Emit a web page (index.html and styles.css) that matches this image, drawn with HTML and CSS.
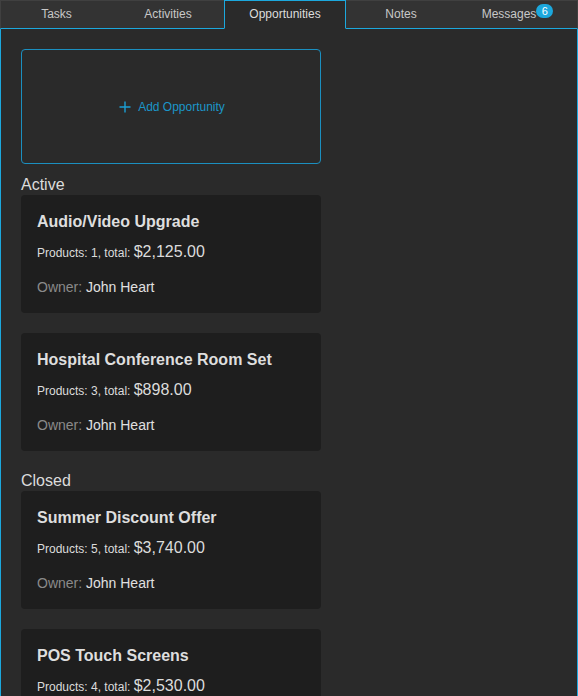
FILE: index.html
```html
<!DOCTYPE html>
<html>
<head>
<meta charset="utf-8">
<link rel="stylesheet" href="styles.css">
</head>
<body>
<div class="panel">
  <div class="tabs">
    <div class="tab tab-tasks">Tasks</div>
    <div class="tab tab-activities">Activities</div>
    <div class="tab tab-opps active">Opportunities</div>
    <div class="tab tab-notes">Notes</div>
    <div class="tab tab-messages">Messages<span class="badge">6</span></div>
  </div>
  <div class="content">
    <div class="add-box">
      <svg class="plus" width="12" height="12" viewBox="0 0 12 12"><path d="M6 0.5V11.5M0.5 6H11.5" stroke="currentColor" stroke-width="1.4" fill="none"/></svg>
      <span>Add Opportunity</span>
    </div>

    <div class="group">
      <div class="group-label">Active</div>
      <div class="card">
        <div class="card-title">Audio/Video Upgrade</div>
        <div class="card-products">Products: 1, total: <span class="price">$2,125.00</span></div>
        <div class="card-owner"><span class="owner-label">Owner:</span> John Heart</div>
      </div>
      <div class="card">
        <div class="card-title">Hospital Conference Room Set</div>
        <div class="card-products">Products: 3, total: <span class="price">$898.00</span></div>
        <div class="card-owner"><span class="owner-label">Owner:</span> John Heart</div>
      </div>
    </div>

    <div class="group">
      <div class="group-label">Closed</div>
      <div class="card">
        <div class="card-title">Summer Discount Offer</div>
        <div class="card-products">Products: 5, total: <span class="price">$3,740.00</span></div>
        <div class="card-owner"><span class="owner-label">Owner:</span> John Heart</div>
      </div>
      <div class="card">
        <div class="card-title">POS Touch Screens</div>
        <div class="card-products">Products: 4, total: <span class="price">$2,530.00</span></div>
        <div class="card-owner"><span class="owner-label">Owner:</span> John Heart</div>
      </div>
    </div>
  </div>
</div>
</body>
</html>
```

FILE: styles.css
```css
html, body {
  margin: 0;
  padding: 0;
  background: #2a2a2a;
  font-family: "Liberation Sans", Arial, sans-serif;
  color: #dedede;
}

.panel {
  width: 578px;
  height: 696px;
  overflow: hidden;
  display: flex;
  flex-direction: column;
}

.tabs {
  display: flex;
  height: 29px;
  flex: none;
}

.tab {
  box-sizing: border-box;
  height: 29px;
  background: #333333;
  border-top: 1px solid #404040;
  border-bottom: 1px solid #1ca8dd;
  color: #c8c8c8;
  font-size: 12px;
  display: flex;
  align-items: center;
  justify-content: center;
  padding-bottom: 2px;
}

.tab-tasks { width: 112px; border-left: 1px solid #404040; }
.tab-activities { width: 112px; }
.tab-opps { width: 122px; }
.tab-notes { width: 110px; }
.tab-messages { width: 122px; border-right: 1px solid #404040; padding-left: 2px; }

.tab.active {
  background: #2a2a2a;
  border: 1px solid #1ca8dd;
  border-bottom: 1px solid #2a2a2a;
  color: #dcdcdc;
}

.badge {
  display: inline-block;
  box-sizing: border-box;
  min-width: 17px;
  height: 14px;
  padding: 0 4px;
  border-radius: 7px;
  background: #1ca8dd;
  color: #ffffff;
  font-size: 11px;
  line-height: 14px;
  text-align: center;
  position: relative;
  top: -3px;
}

.content {
  flex: 1;
  border-left: 1px solid #1ca8dd;
  border-right: 1px solid #1ca8dd;
  padding: 20px 0 0 20px;
}

.add-box {
  box-sizing: border-box;
  width: 300px;
  height: 115px;
  border: 1px solid #1b8fc0;
  border-radius: 4px;
  display: flex;
  align-items: center;
  justify-content: center;
  gap: 7px;
  padding-left: 2px;
  color: #1b96c9;
  font-size: 12px;
}

.plus {
  display: block;
  color: #1b9fd4;
}

.group {
  display: flex;
  flex-direction: column;
  gap: 20px;
  width: 300px;
}

.group-label {
  font-size: 16px;
  line-height: 21px;
  color: #dcdcdc;
  margin-bottom: -20px;
}

.add-box + .group { margin-top: 10px; }
.group + .group { margin-top: 19px; }

.card {
  background: #1e1e1e;
  border-radius: 4px;
  padding: 17px 16px 16px 16px;
  height: 118px;
  box-sizing: border-box;
}

.card-title {
  font-size: 16px;
  font-weight: bold;
  line-height: 20px;
  color: #dedede;
}

.card-products {
  margin-top: 9px;
  font-size: 12px;
  line-height: 22px;
  color: #dcdcdc;
}

.price {
  font-size: 16px;
}

.card-owner {
  margin-top: 13px;
  font-size: 14px;
  line-height: 20px;
  color: #e0e0e0;
}

.owner-label {
  color: #8a8a8a;
}
```
